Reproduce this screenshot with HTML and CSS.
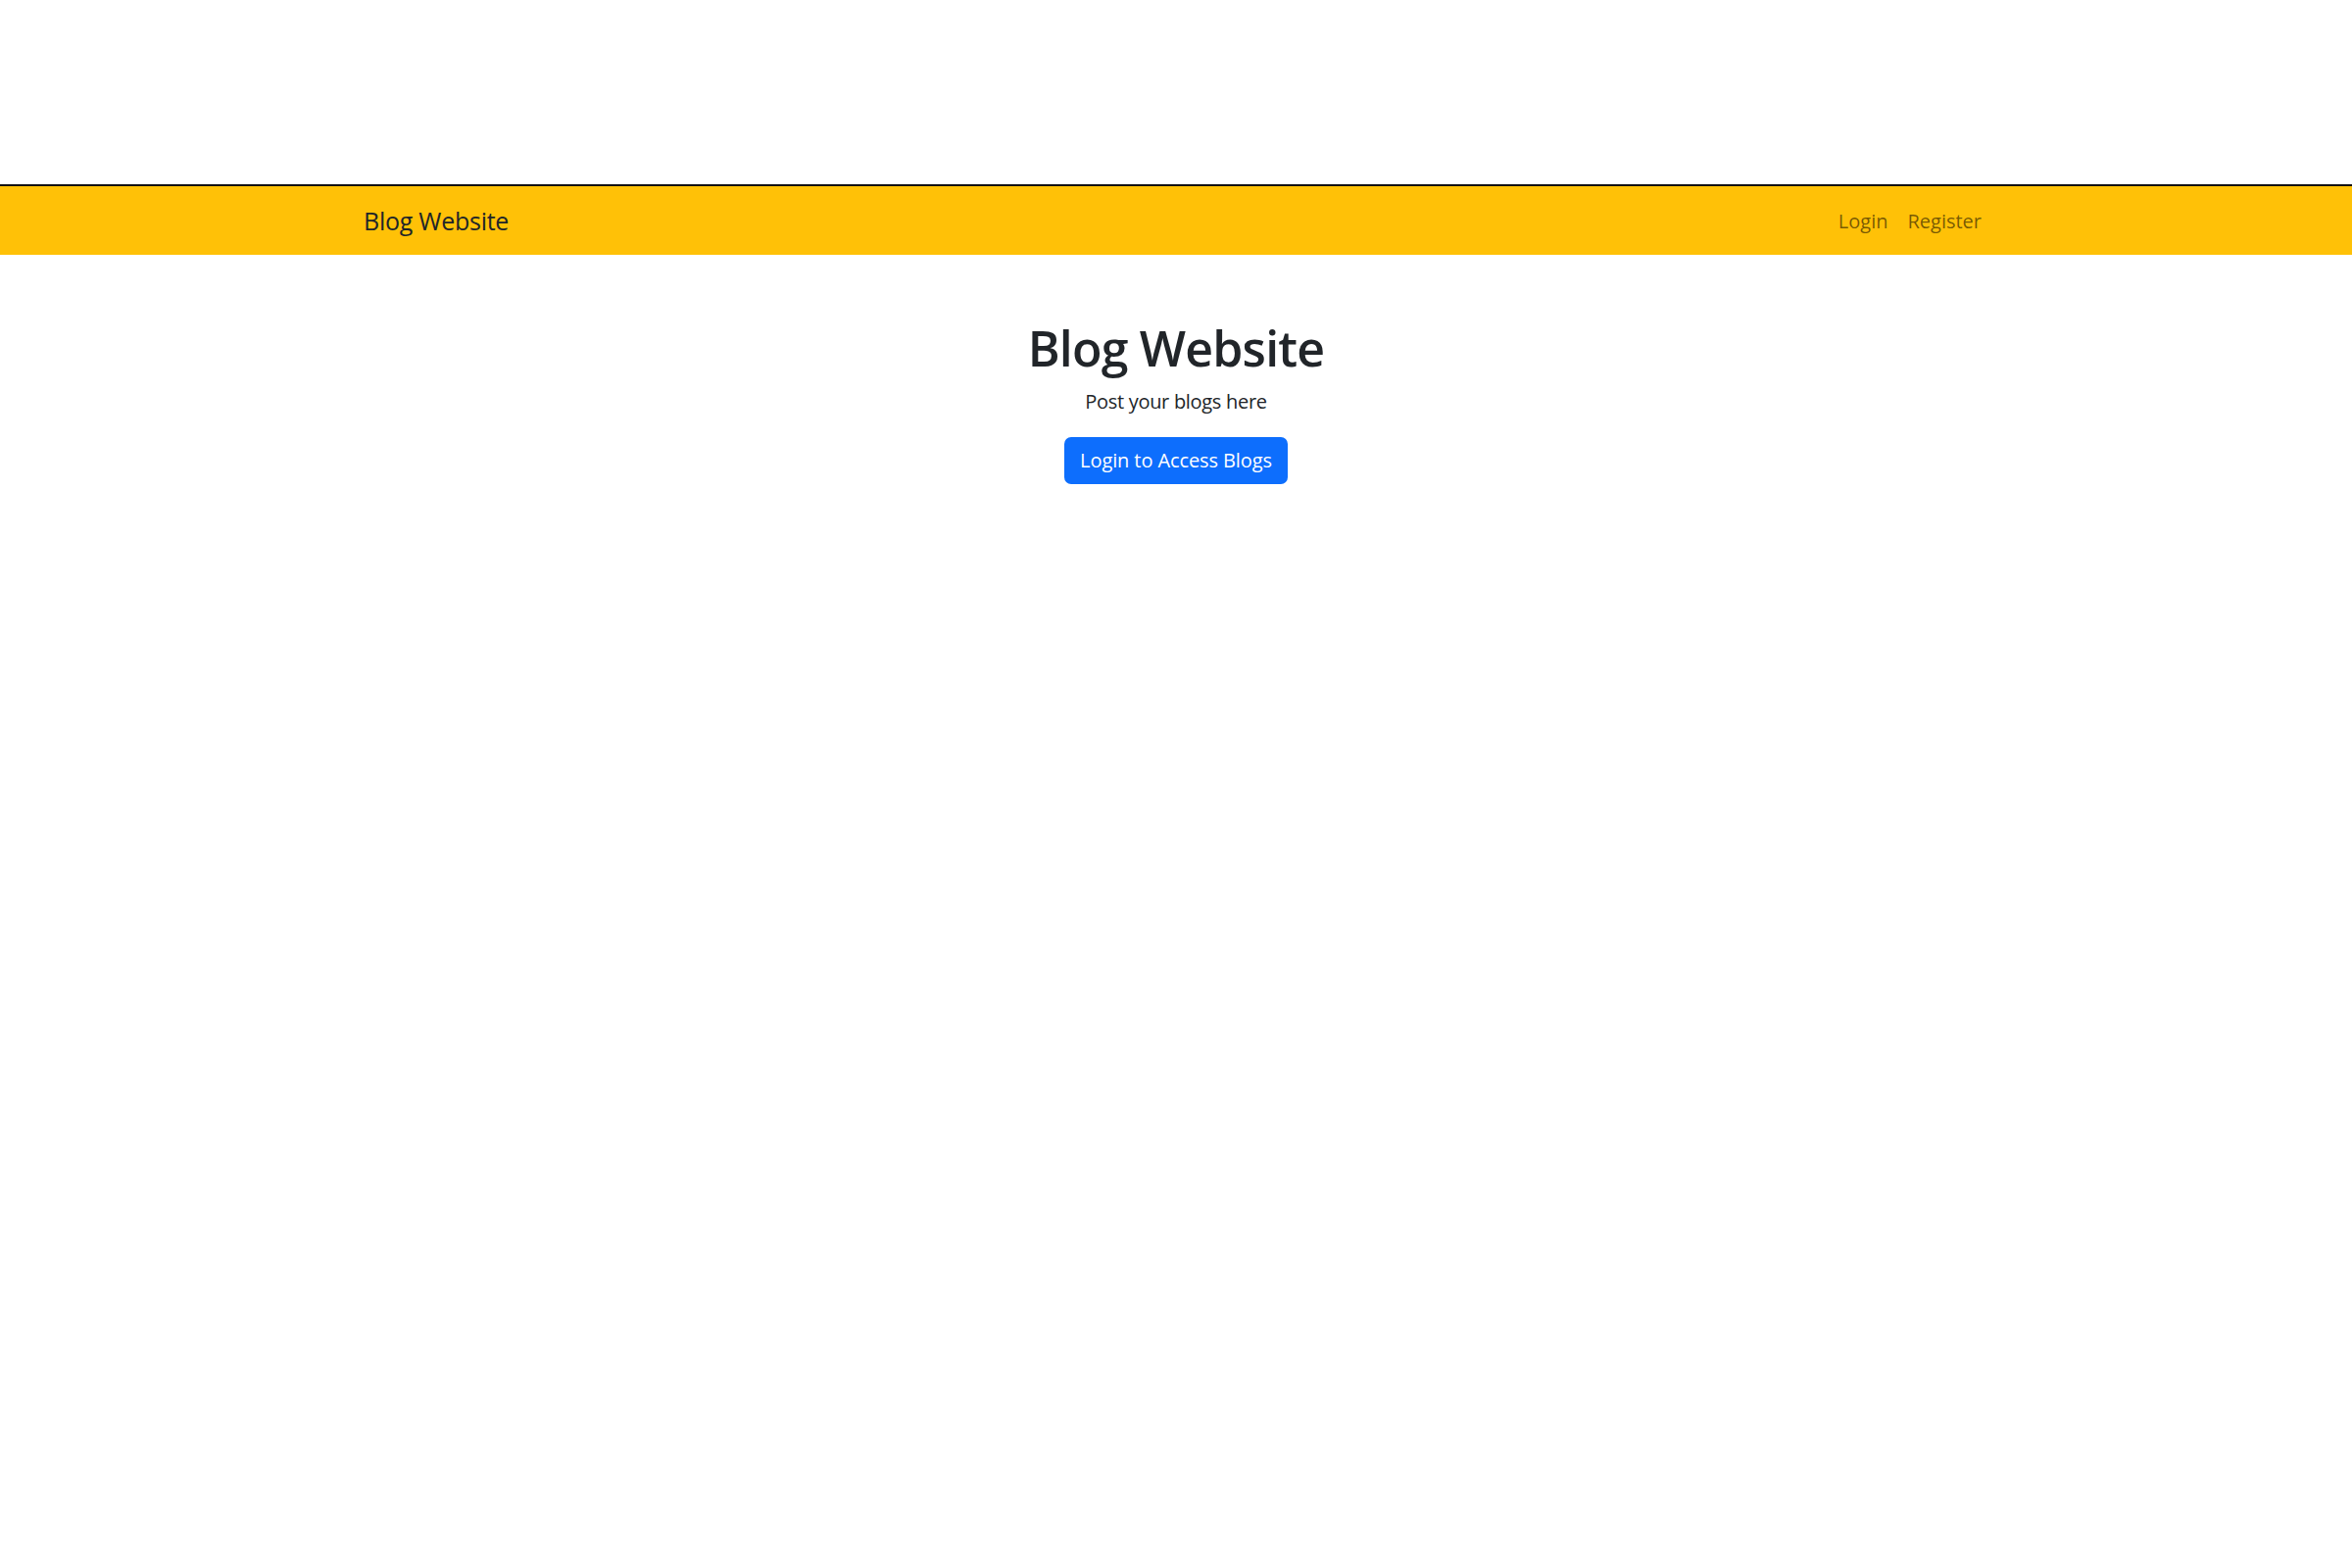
FILE: index.html
```html
<!DOCTYPE html>
<html lang="en">
<head>
<meta charset="utf-8">
<title>Blog Website</title>
<link rel="stylesheet" href="styles.css">
</head>
<body>
<div class="top-space"></div>
<nav class="navbar">
  <div class="nav-inner">
    <a class="brand" href="#">Blog Website</a>
    <ul class="nav-links">
      <li><a href="#">Login</a></li>
      <li><a href="#">Register</a></li>
    </ul>
  </div>
</nav>
<main class="hero">
  <h1 class="title">Blog Website</h1>
  <p class="lead">Post your blogs here</p>
  <a class="btn" href="#">Login to Access Blogs</a>
</main>
</body>
</html>
```

FILE: styles.css
```css
* { box-sizing: border-box; }
html, body { margin: 0; padding: 0; background: #fff; }
body {
  font-family: "Open Sans", "Noto Sans", sans-serif;
  color: #212529;
  font-size: 20px;
  line-height: 1.5;
}
.top-space { height: 188px; }
.navbar {
  background: #ffc107;
  border-top: 2px solid #111;
  height: 72px;
}
.nav-inner {
  width: 1674px;
  margin: 0 auto;
  height: 100%;
  display: flex;
  align-items: center;
  justify-content: space-between;
  padding: 2px 5px 0 8px;
}
.brand {
  font-size: 25px;
  letter-spacing: -0.25px;
  color: #212529;
  text-decoration: none;
}
.nav-links {
  list-style: none;
  margin: 0;
  padding: 0;
  display: flex;
}
.nav-links a {
  display: block;
  padding: 0 10px;
  color: rgba(0,0,0,.55);
  text-decoration: none;
  font-size: 20px;
}
.hero {
  display: flex;
  flex-direction: column;
  align-items: center;
  padding-top: 65px;
}
.title {
  margin: 0 0 10px;
  font-size: 50px;
  font-weight: 600;
  letter-spacing: -0.8px;
  line-height: 60px;
}
.lead {
  margin: 0 0 21px;
  font-size: 20px;
  line-height: 30px;
  letter-spacing: -0.3px;
}
.btn {
  display: inline-block;
  background: #0d6efd;
  color: #fff;
  text-decoration: none;
  border-radius: 7px;
  padding: 9px 16px;
  font-size: 20px;
  line-height: 30px;
  height: 48px;
  letter-spacing: -0.1px;
}
```
